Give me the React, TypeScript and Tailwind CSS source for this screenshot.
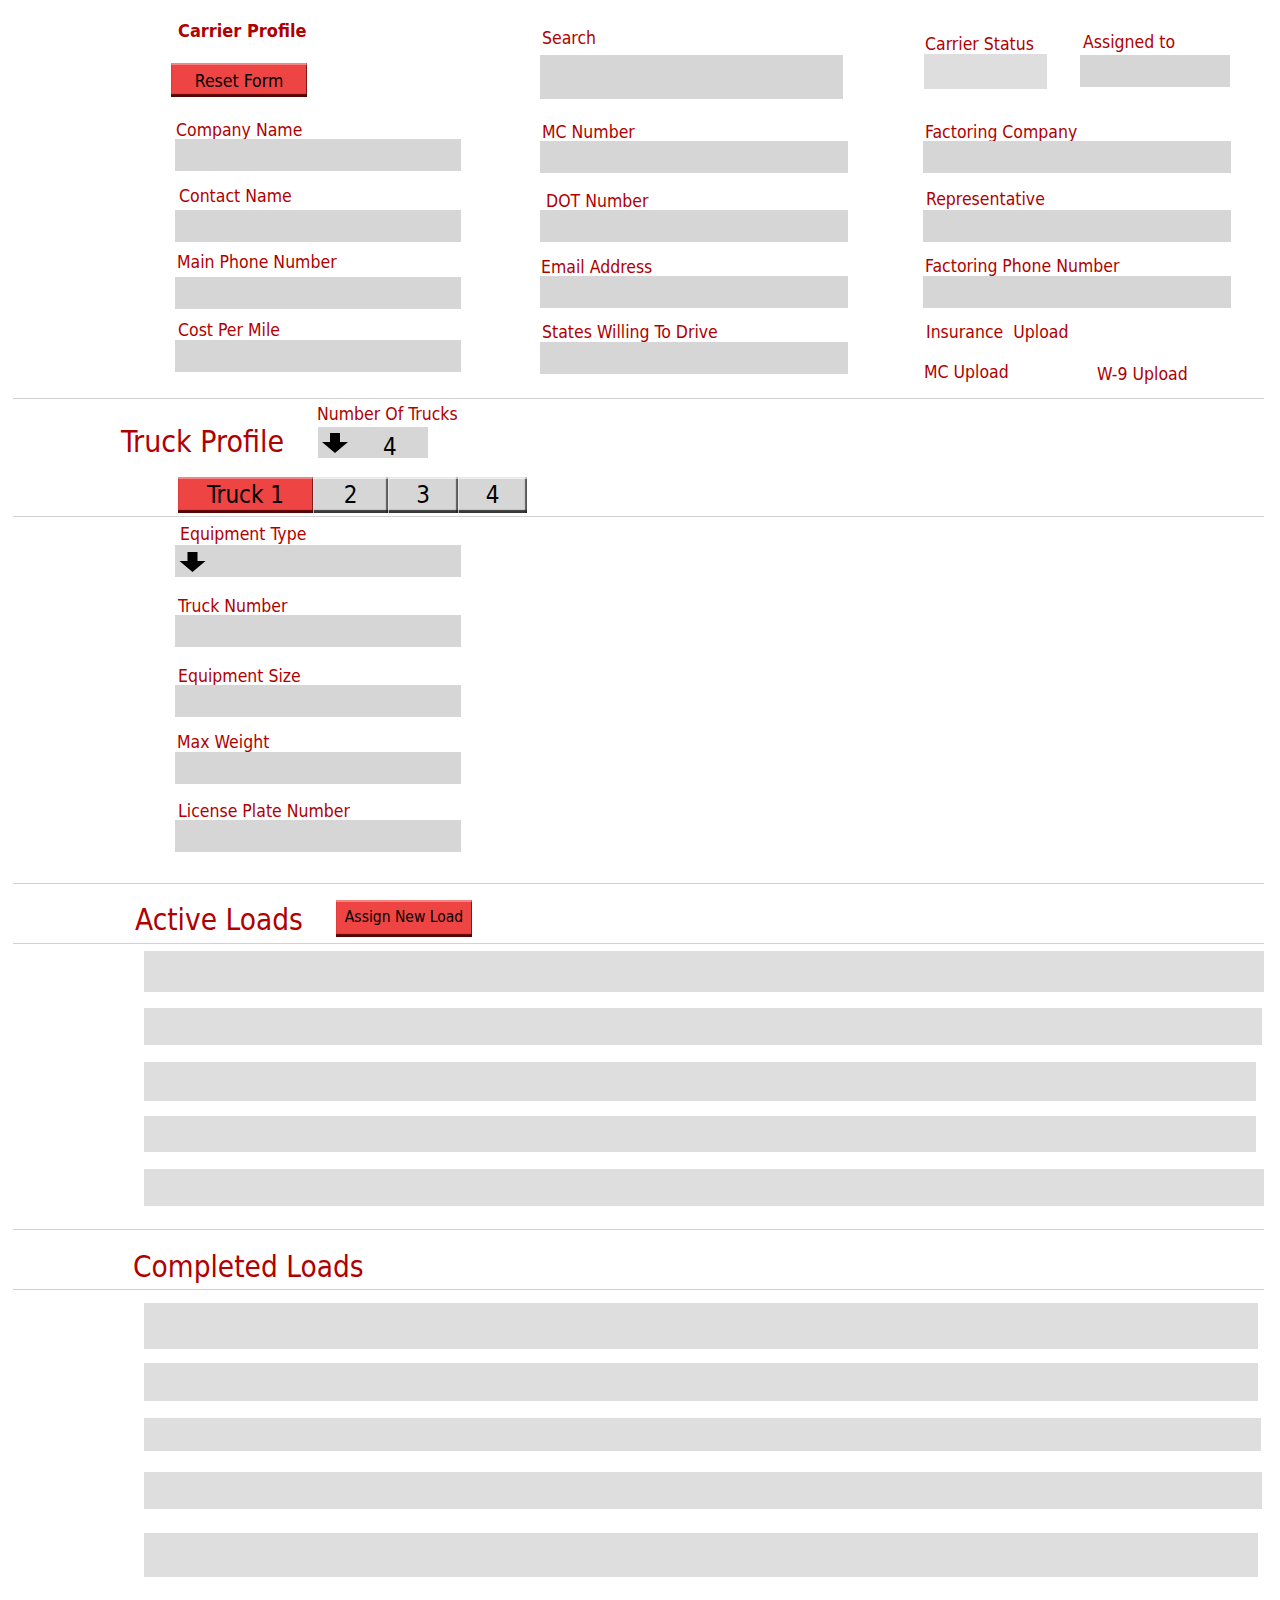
import React from 'react';

const FONT = { fontFamily: '"DejaVu Sans Condensed", "Liberation Sans", Arial, sans-serif' };

function DownArrow({ className }: { className?: string }) {
  return (
    <svg viewBox="0 0 26 20" className={className} fill="#000">
      <path d="M8 0h10v9h8L13 20 0 9h8z" />
    </svg>
  );
}

function Divider({ className = '' }: { className?: string }) {
  return <div className={`ml-[13px] mr-[16px] h-px bg-[#d2d2d2] ${className}`} />;
}

interface FieldProps {
  label: string;
  wrap: string;
  labelCls: string;
  inputCls: string;
}

function Field({ label, wrap, labelCls, inputCls }: FieldProps) {
  return (
    <div className={`flex flex-col ${wrap}`}>
      <label className={`text-[17.5px] leading-[18px] text-[#b00000] whitespace-pre ${labelCls}`}>{label}</label>
      <div className={`bg-[#d6d6d6] ${inputCls}`} />
    </div>
  );
}

const redBtn =
  'bg-[#ee4444] text-black shadow-[inset_0_2px_0_rgba(255,255,255,0.35),inset_0_-3px_1px_rgba(70,0,0,0.9),inset_-1px_0_0_rgba(70,0,0,0.6)]';
const greyTab =
  'bg-[#d6d6d6] text-black shadow-[inset_1px_2px_0_rgba(255,255,255,0.6),inset_0_-3px_1px_rgba(30,30,30,0.85),inset_-2px_0_1px_rgba(40,40,40,0.7)]';

const activeRows = [
  'mt-[7px] h-[41px] w-[1120px]',
  'mt-[16px] h-[37px] w-[1118px]',
  'mt-[17px] h-[39px] w-[1112px]',
  'mt-[15px] h-[36px] w-[1112px]',
  'mt-[17px] h-[37px] w-[1120px]',
];

const completedRows = [
  'mt-[13px] h-[46px] w-[1114px]',
  'mt-[14px] h-[38px] w-[1114px]',
  'mt-[17px] h-[33px] w-[1117px]',
  'mt-[21px] h-[37px] w-[1118px]',
  'mt-[24px] h-[44px] w-[1114px]',
];

export default function App() {
  return (
    <div className="w-[1280px] min-h-[1600px] bg-white" style={FONT}>
      {/* carrier profile */}
      <div className="flex items-start">
        <div className="ml-[171px] flex w-[369px] flex-col pt-[20px]">
          <h1 className="ml-[7px] text-[18px] font-bold leading-[22px] text-[#b00000]">Carrier Profile</h1>
          <button className={`mt-[21px] h-[34px] w-[136px] pt-[2px] text-[17.5px] leading-[20px] ${redBtn}`}>
            Reset Form
          </button>
          <Field label="Company Name" wrap="mt-[24px]" labelCls="ml-[5px]" inputCls="ml-[4px] h-[32px] w-[286px]" />
          <Field label="Contact Name" wrap="mt-[16px]" labelCls="ml-[8px]" inputCls="ml-[4px] mt-[5px] h-[32px] w-[286px]" />
          <Field label="Main Phone Number" wrap="mt-[11px]" labelCls="ml-[6px]" inputCls="ml-[4px] mt-[6px] h-[32px] w-[286px]" />
          <Field label="Cost Per Mile" wrap="mt-[12px]" labelCls="ml-[7px]" inputCls="ml-[4px] mt-[1px] h-[32px] w-[286px]" />
        </div>

        <div className="flex w-[383px] flex-col pt-[29px]">
          <Field label="Search" wrap="" labelCls="ml-[2px]" inputCls="mt-[8px] h-[44px] w-[303px]" />
          <Field label="MC Number" wrap="mt-[24px]" labelCls="ml-[2px]" inputCls="h-[32px] w-[308px]" />
          <Field label="DOT Number" wrap="mt-[19px]" labelCls="ml-[6px]" inputCls="h-[32px] w-[308px]" />
          <Field label="Email Address" wrap="mt-[16px]" labelCls="ml-[1px]" inputCls="h-[32px] w-[308px]" />
          <Field label="States Willing To Drive" wrap="mt-[15px]" labelCls="ml-[2px]" inputCls="mt-[1px] h-[32px] w-[308px]" />
        </div>

        <div className="flex flex-col pt-[33px]">
          <div className="flex items-start">
            <div className="ml-[1px] flex w-[123px] flex-col pt-[2px]">
              <label className="ml-[1px] whitespace-nowrap text-[17.5px] leading-[18px] text-[#b00000]">Carrier Status</label>
              <div className="mt-[1px] h-[35px] w-[123px] bg-[#dedede]" />
            </div>
            <div className="ml-[33px] flex flex-col">
              <label className="ml-[3px] text-[17.5px] leading-[18px] text-[#b00000]">Assigned to</label>
              <div className="mt-[4px] h-[32px] w-[150px] bg-[#d6d6d6]" />
            </div>
          </div>
          <Field label="Factoring Company" wrap="mt-[34px]" labelCls="ml-[2px]" inputCls="h-[32px] w-[308px]" />
          <Field label="Representative" wrap="mt-[17px]" labelCls="ml-[3px]" inputCls="mt-[2px] h-[32px] w-[308px]" />
          <Field label="Factoring Phone Number" wrap="mt-[15px]" labelCls="ml-[2px]" inputCls="mt-[1px] h-[32px] w-[308px]" />
          <div className="ml-[3px] mt-[15px] whitespace-pre text-[17.5px] leading-[18px] text-[#b00000]">Insurance  Upload</div>
          <div className="mt-[22px] flex items-start text-[17.5px] leading-[18px] text-[#b00000]">
            <span className="ml-[1px] w-[173px]">MC Upload</span>
            <span className="mt-[2px]">W-9 Upload</span>
          </div>
        </div>
      </div>

      <Divider className="mt-[15px]" />

      {/* truck profile */}
      <div className="flex items-start pl-[121px]">
        <h2 className="mt-[26px] w-[196px] text-[30px] leading-[34px] text-[#b00000]">Truck Profile</h2>
        <div className="mt-[6px] flex flex-col">
          <label className="text-[17.5px] leading-[18px] text-[#b00000]">Number Of Trucks</label>
          <div className="ml-[1px] mt-[4px] flex h-[31px] w-[110px] items-start bg-[#d6d6d6]">
            <DownArrow className="ml-[4px] mt-[6px] h-[20px] w-[26px]" />
            <span className="ml-[35px] mt-[8px] text-[24px] leading-[24px] text-black">4</span>
          </div>
        </div>
      </div>

      <div className="ml-[178px] mt-[18px] flex h-[36px]">
        <button className={`w-[135px] text-[24px] leading-[28px] ${redBtn}`}>Truck 1</button>
        <button className={`w-[75px] text-[24px] leading-[28px] ${greyTab}`}>2</button>
        <button className={`w-[70px] text-[24px] leading-[28px] ${greyTab}`}>3</button>
        <button className={`w-[69px] text-[24px] leading-[28px] ${greyTab}`}>4</button>
      </div>

      <Divider className="mt-[3px]" />

      {/* truck fields */}
      <div className="ml-[175px] flex flex-col">
        <div className="mt-[8px] flex flex-col">
          <label className="ml-[5px] text-[17.5px] leading-[18px] text-[#b00000]">Equipment Type</label>
          <div className="mt-[2px] flex h-[32px] w-[286px] items-start bg-[#d6d6d6]">
            <DownArrow className="ml-[4px] mt-[7px] h-[20px] w-[27px]" />
          </div>
        </div>
        <Field label="Truck Number" wrap="mt-[20px]" labelCls="ml-[3px]" inputCls="h-[32px] w-[286px]" />
        <Field label="Equipment Size" wrap="mt-[20px]" labelCls="ml-[3px]" inputCls="h-[32px] w-[286px]" />
        <Field label="Max Weight" wrap="mt-[16px]" labelCls="ml-[2px]" inputCls="mt-[1px] h-[32px] w-[286px]" />
        <Field label="License Plate Number" wrap="mt-[18px]" labelCls="ml-[3px]" inputCls="h-[32px] w-[286px]" />
      </div>

      <Divider className="mt-[31px]" />

      {/* active loads */}
      <div className="flex items-start pl-[135px]">
        <h2 className="mt-[19px] w-[201px] text-[29.5px] leading-[34px] text-[#b00000]">Active Loads</h2>
        <button className={`mt-[16px] h-[37px] w-[136px] pb-[3px] text-[15.5px] leading-[18px] ${redBtn}`}>
          Assign New Load
        </button>
      </div>

      <Divider className="mt-[6px]" />

      <div className="ml-[144px] flex flex-col">
        {activeRows.map((cls, i) => (
          <div key={i} className={`bg-[#dedede] ${cls}`} />
        ))}
      </div>

      <Divider className="mt-[23px]" />

      {/* completed loads */}
      <h2 className="ml-[133px] mt-[20px] text-[29.5px] leading-[34px] text-[#b00000]">Completed Loads</h2>

      <Divider className="mt-[5px]" />

      <div className="ml-[144px] flex flex-col">
        {completedRows.map((cls, i) => (
          <div key={i} className={`bg-[#dedede] ${cls}`} />
        ))}
      </div>
    </div>
  );
}
